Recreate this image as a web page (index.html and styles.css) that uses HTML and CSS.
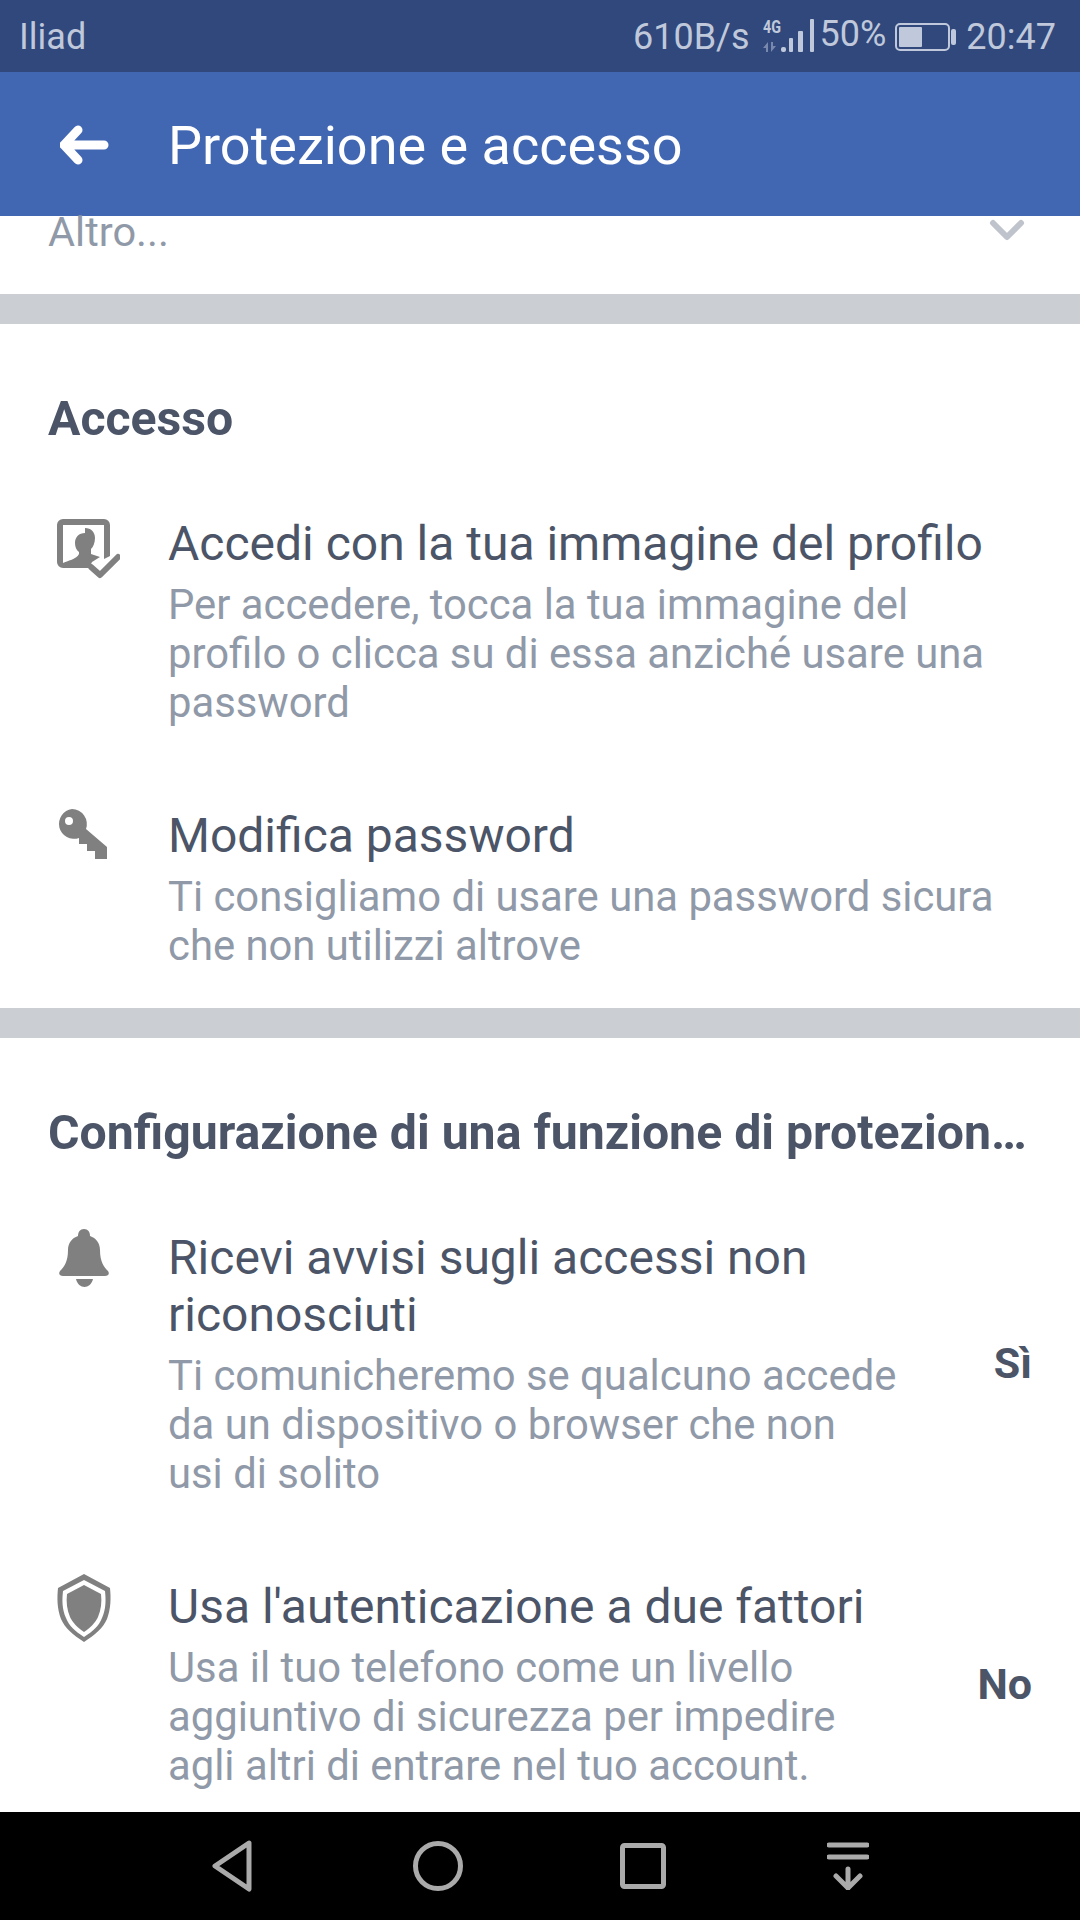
FILE: index.html
```html
<!doctype html>
<html lang="it">
  <head>
    <meta charset="utf-8" />
    <meta name="viewport" content="width=device-width" />
    <title>Protezione e accesso</title>
    <link rel="stylesheet" href="styles.css">
  </head>
  <body>
    <div class="status">
      <span class="carrier">Iliad</span>
      <div class="status-right">
        <span class="speed">610B/s</span>
        <svg class="signal" width="51" height="42" viewBox="0 -4 51 42">
          <text class="net" x="0" y="14" textLength="18" lengthAdjust="spacingAndGlyphs">4G</text>
          <path class="updown" d="M3 33v-4H0l5-6v10zM8 23h2v4h3l-5 6z" />
          <rect class="bar" x="18" y="28" width="5" height="5" rx="2" />
          <rect class="bar" x="26" y="19" width="4" height="14" rx="1" />
          <rect class="bar" x="35" y="12" width="5" height="21" rx="1" />
          <rect class="bar" x="47" y="0" width="4" height="33" rx="1" />
        </svg>
        <span class="pct">50%</span>
        <svg class="battery" width="61" height="28" viewBox="0 0 61 28">
          <rect class="shell" x="1" y="1" width="53" height="26" rx="4" />
          <rect class="level" x="4" y="4" width="23" height="20" rx="1" />
          <rect class="level" x="56" y="6" width="5" height="16" rx="2" />
        </svg>
        <span class="time">20:47</span>
      </div>
    </div>

    <header class="topbar">
      <svg class="back" width="50" height="40" viewBox="0 0 50 40">
        <path d="M18 5 4 20l14 15M4 20h40" />
      </svg>
      <h1>Protezione e accesso</h1>
    </header>

    <main class="content">
      <div class="more">
        <span>Altro...</span>
        <svg width="36" height="22" viewBox="0 0 36 22"><path d="M4 4l14 14L32 4" /></svg>
      </div>

      <section class="group">
        <h2>Accesso</h2>
        <div class="row">
          <svg class="icon" width="72" height="72" viewBox="0 0 72 72">
            <path d="M15 5h41a6 6 0 0 1 6 6v31l-6 3V11H15v38h26l2 5H15a6 6 0 0 1-6-6V11a6 6 0 0 1 6-6z" />
            <path d="M37 14c6 0 10 4 10 10 0 5-2 9-4 11v5l9 3-8 5-3 6H15v-5c4-2 14-4 16-9v-2c-3-2-4-6-4-9 0-6 4-10 10-10z" />
            <path class="tick" d="M43 53l9 8 18-18" />
          </svg>
          <div class="text">
            <h3>Accedi con la tua immagine del profilo</h3>
            <p>Per accedere, tocca la tua immagine del profilo o clicca su di essa anziché usare una password</p>
          </div>
        </div>
        <div class="row">
          <svg class="icon" width="72" height="72" viewBox="0 0 72 72">
            <path fill-rule="evenodd" d="M24 3a15 15 0 0 1 14 20l21 18v12H47v-8h-8v-7h-8v-6a15 15 0 1 1-7-29zm-3 8a4 4 0 1 0 0 8 4 4 0 0 0 0-8z" />
          </svg>
          <div class="text">
            <h3>Modifica password</h3>
            <p>Ti consigliamo di usare una password sicura che non utilizzi altrove</p>
          </div>
        </div>
      </section>

      <section class="group">
        <h2>Configurazione di una funzione di protezione aggiuntiva</h2>
        <div class="row">
          <svg class="icon" width="72" height="72" viewBox="0 0 72 72">
            <path d="M36 1c4 0 6 3 6 7 6 2 10 7 10 14 0 12 4 17 8 21 2 3 0 5-3 5H15c-3 0-5-2-3-5 4-4 8-9 8-21 0-7 4-12 10-14 0-4 2-7 6-7zM28 51h17c-1 5-5 8-8.500 8S29 56 28 51z" />
          </svg>
          <div class="text">
            <h3>Ricevi avvisi sugli accessi non riconosciuti</h3>
            <p>Ti comunicheremo se qualcuno accede da un dispositivo o browser che non usi di solito</p>
          </div>
          <span class="state">Sì</span>
        </div>
        <div class="row">
          <svg class="icon shield" width="72" height="72" viewBox="0 0 72 72">
            <path fill-rule="evenodd" d="M36 1l26 14c1 10 1 20-3 31-4 9-12 16-23 23-11-7-19-14-23-23-4-11-4-21-3-31zm0 6L15 18c-1 9-1 18 3 27 3 8 9 13 18 19 9-6 15-11 18-19 4-9 4-18 3-27z" />
            <path d="M36 12l17 9c1 8 0 16-3 23-3 6-7 10-14 15-7-5-11-9-14-15-3-7-4-15-3-23z" />
          </svg>
          <div class="text">
            <h3>Usa l'autenticazione a due fattori</h3>
            <p>Usa il tuo telefono come un livello aggiuntivo di sicurezza per impedire agli altri di entrare nel tuo account.</p>
          </div>
          <span class="state">No</span>
        </div>
      </section>
    </main>

    <nav class="navbar">
      <svg width="46" height="54" viewBox="0 0 46 54"><path d="M39 4 5 27l34 23z" /></svg>
      <svg width="54" height="54" viewBox="0 0 54 54"><circle cx="27" cy="27" r="22.500" /></svg>
      <svg width="46" height="46" viewBox="0 0 46 46"><rect x="2.500" y="2.500" width="41" height="41" rx="2" /></svg>
      <svg width="42" height="48" viewBox="0 0 42 48"><path d="M2 3h38M2 15h38M21 27v19M9 34l12 12 12-12" /></svg>
    </nav>
  </body>
</html>
```

FILE: styles.css
```css
*, *::before, *::after {
  box-sizing: border-box;
}

html, body {
  margin: 0;
  padding: 0;
}

body {
  display: flex;
  flex-direction: column;
  height: 1920px;
  overflow: hidden;
  background: #fff;
  font-family: Roboto, "Liberation Sans", sans-serif;
}

.status {
  display: flex;
  flex: none;
  align-items: center;
  justify-content: space-between;
  height: 72px;
  padding: 2px 24px 0 19px;
  background: #30487b;
  color: #c0c8dc;
  font-size: 36px;
}

.status-right {
  display: flex;
  align-items: center;
}

.signal {
  margin-left: 13px;
  margin-top: -3px;
}

.signal .net {
  fill: #c0c8dc;
  font-size: 18px;
  font-weight: 700;
}

.signal .updown {
  fill: #7988ad;
}

.signal .bar,
.battery .level {
  fill: #c0c8dc;
}

.pct {
  margin-left: 6px;
  margin-top: -6px;
}

.battery {
  margin-left: 9px;
}

.battery .shell {
  fill: none;
  stroke: #c0c8dc;
  stroke-width: 2;
}

.time {
  margin-left: 10px;
}

.topbar {
  display: flex;
  flex: none;
  align-items: center;
  height: 144px;
  background: #4267b2;
  color: #fff;
}

.back {
  flex: none;
  margin-left: 60px;
  margin-top: 2px;
}

.back path {
  fill: none;
  stroke: #fff;
  stroke-width: 9;
  stroke-linecap: round;
  stroke-linejoin: round;
}

.topbar h1 {
  margin: 2px 0 0 58px;
  font-size: 54px;
  font-weight: 400;
}

.content {
  flex: 1;
  min-height: 0;
}

.more {
  display: flex;
  align-items: flex-start;
  justify-content: space-between;
  height: 78px;
  padding: 1px 55px 0 48px;
  color: #9099a8;
  font-size: 41.500px;
  line-height: 30px;
}

.more svg {
  margin-top: 2px;
}

.more path {
  fill: none;
  stroke: #bfc3cb;
  stroke-width: 6;
  stroke-linecap: round;
  stroke-linejoin: round;
}

.group {
  padding: 66px 48px 0;
  border-top: 30px solid #cbced3;
}

.group + .group {
  margin-top: 38px;
}

.group h2 {
  overflow: hidden;
  margin: 0 0 67px;
  color: #4b5567;
  font-size: 48.200px;
  font-weight: 700;
  line-height: 57px;
  white-space: nowrap;
  text-overflow: ellipsis;
}

.row {
  display: flex;
  align-items: center;
  margin-bottom: 79px;
}

.row:last-child {
  margin-bottom: 0;
}

.icon {
  flex: none;
  align-self: flex-start;
  margin-right: 48px;
  fill: #808080;
}

.icon.shield {
  margin-top: -4px;
}

.icon .tick {
  fill: none;
  stroke: #808080;
  stroke-width: 6;
  stroke-linecap: round;
  stroke-linejoin: round;
}

.text {
  flex: 1;
  min-width: 0;
}

.text h3 {
  margin: 0 0 8px;
  padding-top: 1px;
  color: #4b5567;
  font-size: 48px;
  font-weight: 400;
  line-height: 57px;
}

.text p {
  margin: 0;
  color: #9099a8;
  font-size: 41.800px;
  line-height: 49px;
}

.state {
  flex: none;
  width: 131px;
  color: #4b5567;
  font-size: 43px;
  font-weight: 700;
  text-align: right;
}

.navbar {
  display: grid;
  flex: none;
  grid-template-columns: repeat(4, 205px);
  align-items: center;
  justify-items: center;
  height: 108px;
  padding-left: 130px;
  background: #000;
}

.navbar svg {
  fill: none;
  stroke: #aaa;
  stroke-width: 5;
  stroke-linecap: round;
  stroke-linejoin: round;
}
```
